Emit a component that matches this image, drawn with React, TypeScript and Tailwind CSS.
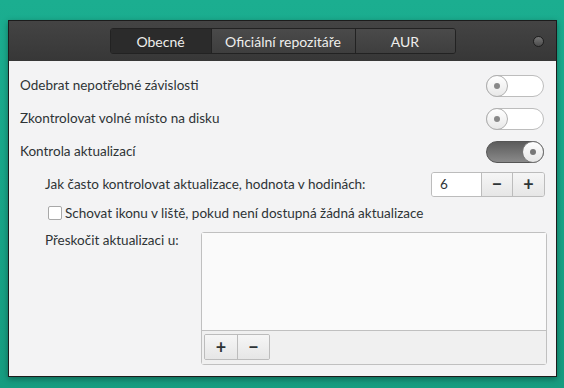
import { FC } from 'react'

const Toggle: FC<{ on?: boolean }> = ({ on = false }) => {
  if (on) {
    return (
      <div className="relative h-[22px] w-[58px] rounded-full border border-[#555] bg-gradient-to-b from-[#5c5c5c] to-[#8a8a8a]">
        <div className="absolute right-[-1px] top-[-1px] flex h-[22px] w-[22px] items-center justify-center rounded-full border border-[#777] bg-gradient-to-b from-white to-[#e6e6e6]">
          <div className="h-[6px] w-[6px] rounded-full bg-[#777]" />
        </div>
      </div>
    )
  }
  return (
    <div className="relative h-[22px] w-[58px] rounded-full border border-[#bdbdbd] bg-white">
      <div className="absolute left-[-1px] top-[-1px] flex h-[22px] w-[22px] items-center justify-center rounded-full border border-[#b0b0b0] bg-gradient-to-b from-white to-[#e8e8e8]">
        <div className="h-[6px] w-[6px] rounded-full bg-[#888]" />
      </div>
    </div>
  )
}

const Row: FC<{ label: string; on?: boolean }> = ({ label, on }) => (
  <div className="flex h-[33px] items-center justify-between pr-[12px]">
    <span>{label}</span>
    <Toggle on={on} />
  </div>
)

export default function App() {
  return (
    <div
      className="h-[388px] w-[564px] overflow-hidden bg-gradient-to-b from-[#1bae90] to-[#169c80] pt-[20px] pl-[8px] text-[13.5px] text-[#2e3436]"
      style={{ fontFamily: 'Lato, "Noto Sans", sans-serif' }}
    >
      <div className="flex h-[357px] w-[549px] flex-col border border-[#1c1c1c] bg-[#f3f3f4] shadow-[0_2px_6px_rgba(0,0,0,0.35)]">
        {/* header */}
        <div className="relative flex h-[40px] items-center justify-center bg-gradient-to-b from-[#444] to-[#373737]">
          <div className="flex h-[26px] overflow-hidden rounded-[3px] border border-[#222] text-[14px] text-[#eeeeec]">
            <div className="flex w-[100px] items-center justify-center bg-[#2b2b2b]">Obecné</div>
            <div className="flex w-[144px] items-center justify-center border-l border-[#222] bg-gradient-to-b from-[#4a4a4a] to-[#3e3e3e]">
              Oficiální repozitáře
            </div>
            <div className="flex w-[100px] items-center justify-center border-l border-[#222] bg-gradient-to-b from-[#4a4a4a] to-[#3e3e3e]">
              AUR
            </div>
          </div>
          <div className="absolute right-[12px] top-[15px] h-[11px] w-[11px] rounded-full border border-[#1e1e1e] bg-gradient-to-b from-[#777] to-[#4b4b4b]" />
        </div>

        {/* content */}
        <div className="flex flex-col pl-[11px] pt-[8px]">
          <Row label="Odebrat nepotřebné závislosti" />
          <Row label="Zkontrolovat volné místo na disku" />
          <Row label="Kontrola aktualizací" on />

          <div className="flex h-[32px] items-center justify-between pl-[25px] pr-[11px]">
            <span>Jak často kontrolovat aktualizace, hodnota v hodinách:</span>
            <div className="flex h-[25px] overflow-hidden rounded-[3px] border border-[#bcbcbc]">
              <div className="flex w-[49px] items-center bg-white pl-[8px]">6</div>
              <div className="flex w-[31px] items-center justify-center border-l border-[#bcbcbc] bg-gradient-to-b from-[#f6f6f6] to-[#e6e6e6] text-[18px] font-bold leading-none">
                −
              </div>
              <div className="flex w-[32px] items-center justify-center border-l border-[#bcbcbc] bg-gradient-to-b from-[#f6f6f6] to-[#e6e6e6] text-[18px] font-bold leading-none">
                +
              </div>
            </div>
          </div>

          <div className="flex h-[26px] items-center gap-[3px] pl-[28px]">
            <div className="h-[14px] w-[14px] rounded-[2px] border border-[#a8a8a8] bg-white" />
            <span>Schovat ikonu v liště, pokud není dostupná žádná aktualizace</span>
          </div>

          <div className="mt-[6px] flex pl-[25px]">
            <span className="w-[156px] leading-[16px]">Přeskočit aktualizaci u:</span>
            <div className="flex h-[133px] w-[346px] flex-col rounded-[3px] border border-[#c0c0c0] bg-white">
              <div className="flex-1 bg-[#fafafa]" />
              <div className="flex h-[34px] items-start border-t border-[#c0c0c0] bg-[#f0f0f0] pl-[2px] pt-[3px]">
                <div className="flex h-[26px] overflow-hidden rounded-[2px] border border-[#bcbcbc]">
                  <div className="flex w-[32px] items-center justify-center bg-gradient-to-b from-[#f6f6f6] to-[#e6e6e6] text-[18px] font-bold leading-none">
                    +
                  </div>
                  <div className="flex w-[32px] items-center justify-center border-l border-[#bcbcbc] bg-gradient-to-b from-[#f6f6f6] to-[#e6e6e6] text-[18px] font-bold leading-none">
                    −
                  </div>
                </div>
              </div>
            </div>
          </div>
        </div>
      </div>
    </div>
  )
}
